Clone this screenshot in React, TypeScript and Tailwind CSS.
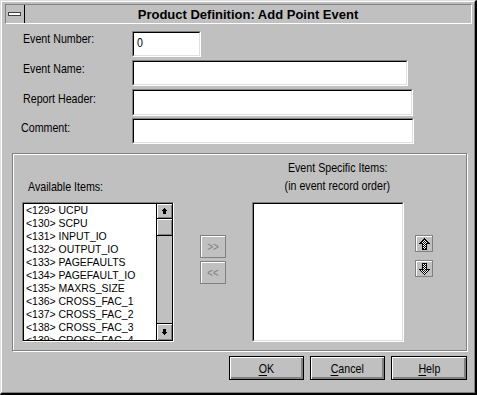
import React from 'react';

const FONT = "font-['Liberation_Sans',Arial,sans-serif]";

function N({ children, center }: { children: React.ReactNode; center?: boolean }) {
  return (
    <span
      className={
        center
          ? 'inline-block origin-center scale-x-[0.82] whitespace-nowrap'
          : 'inline-block origin-left scale-x-[0.82] whitespace-nowrap'
      }
    >
      {children}
    </span>
  );
}

function Pixels({ rows }: { rows: string[] }) {
  const w = rows[0].length;
  const h = rows.length;
  const rects: React.ReactElement[] = [];
  rows.forEach((r, y) => {
    for (let x = 0; x < w; x++) {
      const c = r[x];
      if (c === '#') rects.push(<rect key={`${x}-${y}`} x={x} y={y} width={1} height={1} fill="#000" />);
      else if (c === '*')
        rects.push(<rect key={`${x}-${y}`} x={x} y={y} width={1} height={1} fill={(x + y) % 2 === 0 ? '#000' : '#fff'} />);
    }
  });
  return (
    <svg width={w} height={h} viewBox={`0 0 ${w} ${h}`} shapeRendering="crispEdges">
      {rects}
    </svg>
  );
}

const UP_BIG = [
  '     #     ',
  '    #*#    ',
  '   #***#   ',
  '  #*****#  ',
  ' #*******# ',
  '####***####',
  '   #***#   ',
  '   #***#   ',
  '   #***#   ',
  '   #***#   ',
  '   #***#   ',
  '   #####   ',
];
const DOWN_BIG = [...UP_BIG].reverse();

const UP_SMALL = ['  #  ', ' ### ', '#####', ' ### ', ' ### ', ' ### '];
const DOWN_SMALL = [...UP_SMALL].reverse();

function Field({ className, value }: { className: string; value?: string }) {
  return (
    <div className={`${className} border border-t-[#808080] border-l-[#808080] border-r-white border-b-white`}>
      <div
        className={`w-full h-full border border-t-black border-l-black border-r-[#dfdfdf] border-b-[#dfdfdf] bg-white pl-[3px] pt-[2px] ${FONT} text-[13px] leading-[15px] text-black`}
      >
        {value ? <N>{value}</N> : null}
      </div>
    </div>
  );
}

const ITEMS = [
  '<129> UCPU',
  '<130> SCPU',
  '<131> INPUT_IO',
  '<132> OUTPUT_IO',
  '<133> PAGEFAULTS',
  '<134> PAGEFAULT_IO',
  '<135> MAXRS_SIZE',
  '<136> CROSS_FAC_1',
  '<137> CROSS_FAC_2',
  '<138> CROSS_FAC_3',
  '<139> CROSS_FAC_4',
];

function Btn({ label, u, w }: { label: string; u: string; w: string }) {
  return (
    <div
      className={`${w} h-[24px] border border-black bg-[#c0c0c0] shadow-[inset_1px_1px_0_#fff,inset_-1px_-1px_0_#808080,inset_-2px_-2px_0_#808080] flex items-center justify-center ${FONT} text-[13px] leading-[15px] text-black`}
    >
      <N center>
        <span className="underline underline-offset-[2px]">{u}</span>
        {label}
      </N>
    </div>
  );
}

export default function App() {
  const label = `${FONT} text-[13px] leading-[15px] text-black whitespace-nowrap`;
  return (
    <div className="w-[477px] h-[395px] bg-[#c0c0c0] border-t border-l border-r-2 border-b-2 border-t-[#dfdfdf] border-l-[#dfdfdf] border-r-black border-b-black">
      <div className="w-full h-full border border-t-white border-l-white border-r-[#808080] border-b-[#808080] flex flex-col">
        {/* Title bar */}
        <div className="mt-[2px] ml-[3px] mr-[2px] h-[20px] border border-t-[#808080] border-l-[#808080] border-r-white border-b-white flex">
          <div className="w-[19px] h-full border-r border-r-black flex items-center pl-[2px]">
            <div className="w-[13px] h-[4px] border border-[#404040] bg-white" />
          </div>
          <div className={`flex-1 flex items-center justify-center ${FONT} font-bold text-[13px] leading-[15px] text-black`}>
            Product Definition: Add Point Event
          </div>
        </div>

        {/* Form rows */}
        <div className="mt-[7px] flex items-start">
          <div className={`ml-[21px] w-[109px] pt-0 ${label}`}>
            <N>Event Number:</N>
          </div>
          <Field className="w-[69px] h-[26px]" value="0" />
        </div>
        <div className="mt-[3px] flex items-start">
          <div className={`ml-[21px] w-[109px] pt-[1px] ${label}`}>
            <N>Event Name:</N>
          </div>
          <Field className="w-[276px] h-[26px]" />
        </div>
        <div className="mt-[3px] flex items-start">
          <div className={`ml-[21px] w-[109px] pt-[2px] ${label}`}>
            <N>Report Header:</N>
          </div>
          <Field className="w-[281px] h-[27px]" />
        </div>
        <div className="mt-[2px] flex items-start">
          <div className={`ml-[19px] w-[111px] pt-[2px] ${label}`}>
            <N>Comment:</N>
          </div>
          <Field className="w-[282px] h-[26px]" />
        </div>

        {/* Group box */}
        <div className="mt-[9px] ml-[10px] w-[455px] h-[198px] border border-[#808080] shadow-[inset_1px_1px_0_#fff,1px_1px_0_#fff] flex items-start">
          {/* Column A */}
          <div className="ml-[9px] w-[152px] flex flex-col">
            <div className={`mt-[25px] pl-[6px] ${label}`}>
              <N>Available Items:</N>
            </div>
            <div className="mt-[8px] h-[140px] border border-t-[#808080] border-l-[#808080] border-r-white border-b-white">
              <div className="w-full h-full border border-black flex bg-white">
                <div className="flex-1 overflow-hidden pl-[2px]">
                  {ITEMS.map((it) => (
                    <div key={it} className={`${FONT} text-[11px] leading-[13px] text-black whitespace-nowrap`}>
                      <span className="inline-block origin-left scale-x-[0.95] whitespace-nowrap">{it}</span>
                    </div>
                  ))}
                </div>
                <div className="w-[16px] h-full border-l border-l-black bg-[#c0c0c0] flex flex-col">
                  <div className="h-[15px] border-b border-b-black shadow-[inset_1px_1px_0_#fff,inset_-1px_-1px_0_#808080] flex items-center justify-center">
                    <Pixels rows={UP_SMALL} />
                  </div>
                  <div className="h-[17px] border-b border-b-black shadow-[inset_1px_1px_0_#fff,inset_-1px_-1px_0_#808080]" />
                  <div className="flex-1" />
                  <div className="h-[17px] border-t border-t-black shadow-[inset_1px_1px_0_#fff,inset_-1px_-1px_0_#808080] flex items-center justify-center">
                    <Pixels rows={DOWN_SMALL} />
                  </div>
                </div>
              </div>
            </div>
          </div>

          {/* Column B */}
          <div className="ml-[26px] w-[26px] flex flex-col">
            <div className={`mt-[81px] h-[23px] border border-[#808080] shadow-[inset_1px_1px_0_#fff] flex items-center justify-center ${FONT} text-[12px] leading-[12px] text-[#808080]`}>
              <N center>&gt;&gt;</N>
            </div>
            <div className={`mt-[3px] h-[23px] border border-[#808080] shadow-[inset_1px_1px_0_#fff] flex items-center justify-center ${FONT} text-[12px] leading-[12px] text-[#808080]`}>
              <N center>&lt;&lt;</N>
            </div>
          </div>

          {/* Column C */}
          <div className="ml-[26px] w-[152px] flex flex-col">
            <div className={`mt-[5px] pl-[19px] text-center ${FONT} text-[13px] leading-[18px] text-black whitespace-nowrap`}>
              <div>
                <N center>Event Specific Items:</N>
              </div>
              <div>
                <N center>(in event record order)</N>
              </div>
            </div>
            <div className="mt-[7px] h-[140px] border border-t-[#808080] border-l-[#808080] border-r-white border-b-white">
              <div className="w-full h-full border border-t-black border-l-black border-r-[#dfdfdf] border-b-[#dfdfdf] bg-white" />
            </div>
          </div>

          {/* Column D */}
          <div className="ml-[11px] w-[18px] flex flex-col">
            <div className="mt-[81px] h-[17px] border border-[#808080] shadow-[inset_1px_1px_0_#fff] flex items-center justify-center">
              <Pixels rows={UP_BIG} />
            </div>
            <div className="mt-[8px] h-[17px] border border-[#808080] shadow-[inset_1px_1px_0_#fff] flex items-center justify-center">
              <Pixels rows={DOWN_BIG} />
            </div>
          </div>
        </div>

        {/* Buttons */}
        <div className="mt-[5px] ml-[227px] flex gap-[6px]">
          <Btn u="O" label="K" w="w-[75px]" />
          <Btn u="C" label="ancel" w="w-[75px]" />
          <Btn u="H" label="elp" w="w-[76px]" />
        </div>
      </div>
    </div>
  );
}
